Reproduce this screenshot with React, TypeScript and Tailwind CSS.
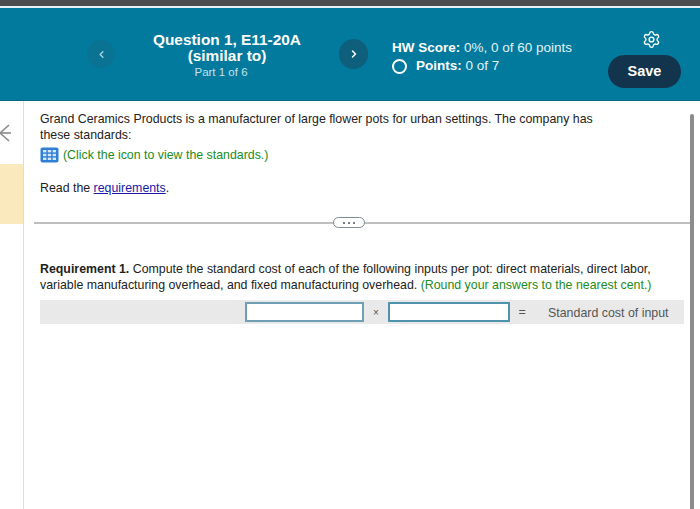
import React from "react";
import { ChevronLeft, ChevronRight, Settings } from "lucide-react";

export default function App() {
  return (
    <div className="w-[700px] h-[509px] overflow-hidden bg-white flex flex-col font-['Liberation_Sans',Arial,sans-serif]">
      {/* Browser strip */}
      <div className="h-[6px] bg-[#4d4d4f] shrink-0" />
      <div className="h-[2px] bg-[#e8f2f6] shrink-0" />

      {/* Header */}
      <header className="h-[93px] shrink-0 bg-[#027a9e] border-b border-[#0b6685] flex text-white">
        <div className="w-[87px] shrink-0" />
        <div className="w-[28px] shrink-0 flex items-center">
          <button className="w-[28px] h-[28px] rounded-full bg-[#0a7394] flex items-center justify-center text-[#a9d3e2]">
            <ChevronLeft className="w-[11px] h-[11px]" strokeWidth={3} />
          </button>
        </div>
        <div className="w-[224px] shrink-0 flex flex-col items-center pt-[24px]">
          <div className="text-[15.4px] leading-[16px] font-bold text-center">Question 1, E11-20A</div>
          <div className="text-[15.4px] leading-[16px] font-bold text-center">(similar to)</div>
          <div className="text-[11.5px] leading-[14px] mt-[1px] mr-[12px] text-[#c3e3ee]">Part 1 of 6</div>
        </div>
        <div className="w-[29px] shrink-0 flex items-center">
          <button className="w-[30px] h-[30px] rounded-full bg-[#0d5f7c] flex items-center justify-center">
            <ChevronRight className="w-[12px] h-[12px]" strokeWidth={3} />
          </button>
        </div>
        <div className="w-[24px] shrink-0" />
        <div className="w-[216px] shrink-0 pt-[31px] text-[13.5px] leading-[18px] text-[#e3f2f7]">
          <div><span className="font-bold text-white">HW Score:</span> 0%, 0 of 60 points</div>
          <div className="flex items-center">
            <span className="w-[15px] h-[15px] rounded-full border-2 border-white mr-[9px]" />
            <span><span className="font-bold text-white">Points:</span> 0 of 7</span>
          </div>
        </div>
        <div className="w-[73px] shrink-0 flex flex-col items-center pt-[22px]">
          <Settings className="w-[19px] h-[19px] mb-[6px] ml-[14px]" strokeWidth={1.8} />
          <button className="w-[73px] h-[33px] rounded-full bg-[#12344d] text-[14.5px] font-bold">Save</button>
        </div>
      </header>

      {/* Body */}
      <div className="flex-1 flex min-h-0">
        {/* Left rail */}
        <aside className="w-[24px] shrink-0 border-r border-[#dcdcdc] flex flex-col">
          <div className="h-[63px] flex items-center shrink-0">
            <svg width="22" height="22" viewBox="0 0 22 22" fill="none" stroke="#8a8a8a" strokeWidth="1.6">
              <path d="M0 11 H11" />
              <path d="M0 11 L9 3" />
              <path d="M0 11 L9 19" />
            </svg>
          </div>
          <div className="h-[60px] bg-[#fae9bd] shrink-0" />
        </aside>

        <main className="flex-1 min-w-0 flex">
          <div className="w-[666px] shrink-0">
            <div className="pl-[16px] pr-[70px] pt-[10px] text-[12.37px] leading-[16px] text-[#222]">
              <p>Grand Ceramics Products is a manufacturer of large flower pots for urban settings. The company has these standards:</p>
              <div className="mt-[4px] flex items-center text-[#228b22]">
                <svg width="19" height="16" viewBox="0 0 19 16" className="mr-[4px] shrink-0">
                  <rect x="0.5" y="0.5" width="18" height="15" rx="2" fill="#2f7fd6" />
                  <g fill="#d5e7fa">
                    <rect x="3" y="3" width="3.4" height="2.4" />
                    <rect x="7.8" y="3" width="3.4" height="2.4" />
                    <rect x="12.6" y="3" width="3.4" height="2.4" />
                    <rect x="3" y="6.8" width="3.4" height="2.4" />
                    <rect x="7.8" y="6.8" width="3.4" height="2.4" />
                    <rect x="12.6" y="6.8" width="3.4" height="2.4" />
                    <rect x="3" y="10.6" width="3.4" height="2.4" />
                    <rect x="7.8" y="10.6" width="3.4" height="2.4" />
                    <rect x="12.6" y="10.6" width="3.4" height="2.4" />
                  </g>
                </svg>
                <span>(Click the icon to view the standards.)</span>
              </div>
              <p className="mt-[17px]">
                Read the <a className="text-[#1a1aa6] underline">requirements</a>.
              </p>
            </div>

            {/* Divider */}
            <div className="relative mt-[26px] ml-[10px] h-[2px] bg-[#bfbfbf]">
              <div className="absolute left-[299px] top-[-5px] w-[32px] h-[11px] rounded-full border border-[#7d8b94] bg-white flex items-center justify-center gap-[3px]">
                <span className="w-[2px] h-[2px] rounded-full bg-[#44525c]" />
                <span className="w-[2px] h-[2px] rounded-full bg-[#44525c]" />
                <span className="w-[2px] h-[2px] rounded-full bg-[#44525c]" />
              </div>
            </div>

            <div className="pl-[16px] pt-[38px] text-[12.37px] leading-[15.5px] text-[#222]">
              <p>
                <span className="font-bold">Requirement 1.</span> Compute the standard cost of each of the following inputs per pot: direct materials, direct labor, variable manufacturing overhead, and fixed manufacturing overhead. <span className="text-[#228b22]">(Round your answers to the nearest cent.)</span>
              </p>
            </div>

            <div className="ml-[16px] mt-[7px] w-[644px] h-[24px] bg-[#e9e9e9] flex items-center text-[12.4px] text-[#555]">
              <div className="w-[205px] shrink-0" />
              <div className="w-[119px] h-[20px] shrink-0 bg-white border-2 border-[#6f9fb3]" />
              <div className="w-[24px] shrink-0 text-center text-[10px]">×</div>
              <div className="w-[122px] h-[20px] shrink-0 bg-white border-2 border-[#4f93ad]" />
              <div className="w-[24px] shrink-0 text-center">=</div>
              <div className="ml-[14px] mt-[2px] whitespace-nowrap">Standard cost of input</div>
            </div>
          </div>

          {/* Scrollbar */}
          <div className="flex-1 pt-[13px]">
            <div className="w-[4px] h-full bg-[#8c8c8c] rounded-t-full" />
          </div>
        </main>
      </div>
    </div>
  );
}
